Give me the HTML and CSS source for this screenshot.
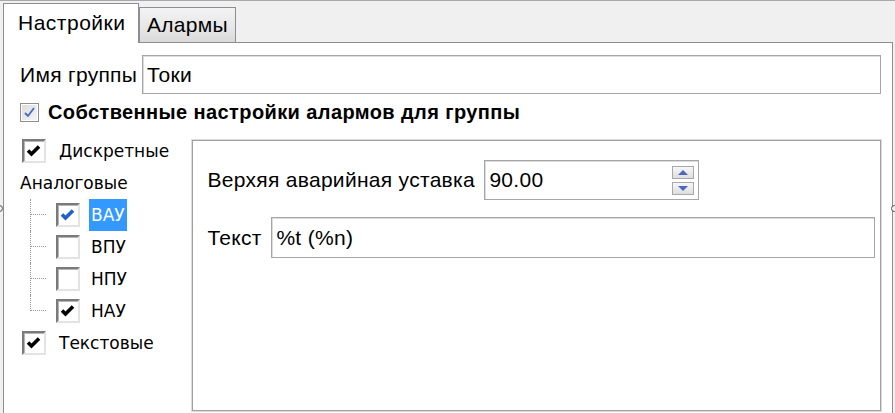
FILE: index.html
```html
<!DOCTYPE html>
<html lang="ru">
<head>
  <meta charset="UTF-8">
  <title>Настройки группы</title>
  <link rel="stylesheet" href="styles.css">
</head>
<body>

<!--вкладки-->
<div class="tabs">
  <div class="tab active">Настройки</div>
  <div class="tab">Алармы</div>
</div>

<div class="panel">

  <!--имя группы-->
  <div class="name-row">
    <span class="name-label">Имя группы</span>
    <div class="input name-input">Токи</div>
  </div>

  <!--собственные настройки-->
  <div class="own-row">
    <span class="vcheck">
      <svg width="13" height="13" viewBox="0 0 13 13"><path d="M2 7l3 3 6-8" fill="none" stroke="#4c66c4" stroke-width="1.8"/></svg>
    </span>
    <span class="own-text">Собственные настройки алармов для группы</span>
  </div>

  <div class="main">

    <!--дерево алармов-->
    <div class="tree">
      <div class="node">
        <span class="check"><svg width="20" height="20" viewBox="0 0 20 20"><path d="M4 9.5l3.5 3.5 7.5-7.5" fill="none" stroke="#000" stroke-width="3.6"/></svg></span>
        <span class="node-text">Дискретные</span>
      </div>
      <div class="node plain">Аналоговые</div>
      <div class="children">
        <div class="leaf">
          <span class="check"><svg width="20" height="20" viewBox="0 0 20 20"><path d="M4 9.5l3.5 3.5 7.5-7.5" fill="none" stroke="#1c5fcf" stroke-width="3.6"/></svg></span>
          <span class="leaf-text selected">ВАУ</span>
        </div>
        <div class="leaf">
          <span class="check"></span>
          <span class="leaf-text">ВПУ</span>
        </div>
        <div class="leaf">
          <span class="check"></span>
          <span class="leaf-text">НПУ</span>
        </div>
        <div class="leaf">
          <span class="check"><svg width="20" height="20" viewBox="0 0 20 20"><path d="M4 9.5l3.5 3.5 7.5-7.5" fill="none" stroke="#000" stroke-width="3.6"/></svg></span>
          <span class="leaf-text">НАУ</span>
        </div>
      </div>
      <div class="node">
        <span class="check"><svg width="20" height="20" viewBox="0 0 20 20"><path d="M4 9.5l3.5 3.5 7.5-7.5" fill="none" stroke="#000" stroke-width="3.6"/></svg></span>
        <span class="node-text">Текстовые</span>
      </div>
    </div>

    <!--параметры аларма-->
    <div class="group">
      <div class="field-row">
        <span class="field-label">Верхяя аварийная уставка</span>
        <div class="input spin-input">
          <span>90.00</span>
          <div class="spin">
            <span class="spin-btn"><i class="arrow-up"></i></span>
            <span class="spin-btn"><i class="arrow-down"></i></span>
          </div>
        </div>
      </div>
      <div class="field-row second">
        <span class="field-label short">Текст</span>
        <div class="input text-input">%t (%n)</div>
      </div>
    </div>
  </div>
</div>

<!--ручки сплиттера-->
<span class="grip grip-left"></span>
<span class="grip grip-right"></span>

</body>
</html>
```

FILE: styles.css
```css
* {
  margin: 0;
  padding: 0;
  box-sizing: border-box;
}

body {
  width: 895px;
  height: 413px;
  overflow: hidden;
  position: relative;
  background-color: #f0f0f0;
  border-top: 1px solid #a9a9a9;
  font-family: "Liberation Sans", Arial, sans-serif;
  font-size: 21px;
  letter-spacing: 0.3px;
  color: #000;
}

/*вкладки*/
.tabs {
  display: flex;
  align-items: flex-end;
  height: 41px;
  padding-left: 3px;
}

.tab {
  width: 97px;
  height: 35px;
  padding-left: 7px;
  line-height: 34px;
  border: 1px solid #8c8e94;
  border-bottom: none;
  background: linear-gradient(#f3f3f3, #e6e6e6 60%, #dadada);
}

.tab.active {
  width: 136px;
  height: 40px;
  margin-bottom: -1px;
  padding-left: 14px;
  line-height: 37px;
  letter-spacing: 0.5px;
  background: #fff;
  position: relative;
  z-index: 1;
}

/*белая панель*/
.panel {
  width: 890px;
  height: 380px;
  margin-left: 3px;
  padding: 12px 11px 0 16px;
  background-color: #fff;
  border: 1px solid #8c8e94;
}

.input {
  display: flex;
  align-items: center;
  height: 100%;
  padding-left: 4px;
  background-color: #fff;
  border: 1px solid #a4a6aa;
  box-shadow: inset 1px 1px 0 #dcdcdc;
}

.name-row {
  display: flex;
  align-items: center;
  height: 39px;
}

.name-label {
  width: 122px;
}

.name-input {
  flex: 1;
}

.own-row {
  display: flex;
  align-items: center;
  height: 19px;
  margin-top: 9px;
}

.vcheck {
  width: 19px;
  height: 19px;
  display: flex;
  align-items: center;
  justify-content: center;
  border: 1px solid #8f8f8f;
  background: linear-gradient(135deg, #dcdcdc, #f6f6f6);
  box-shadow: inset 0 0 0 1px #fff;
}

.own-text {
  margin-left: 9px;
  font-size: 20px;
  letter-spacing: 0.4px;
  font-weight: bold;
}

.main {
  display: flex;
  align-items: flex-start;
  margin-top: 13px;
}

/*дерево*/
.tree {
  width: 173px;
  font-family: "DejaVu Sans", sans-serif;
  font-size: 17px;
  letter-spacing: 0;
}

.node,
.leaf {
  display: flex;
  align-items: center;
  height: 32px;
}

.node .check {
  margin-left: 2px;
}

.node-text {
  margin-left: 13px;
}

.check {
  width: 24px;
  height: 24px;
  display: flex;
  align-items: center;
  justify-content: center;
  background-color: #fff;
  border: 2px solid;
  border-color: #7a7a7a #e3e3e3 #e3e3e3 #7a7a7a;
  box-shadow: inset 1px 1px 0 #b5b5b5;
}

.leaf::before {
  content: "";
  align-self: stretch;
  width: 16px;
  margin-left: 10px;
  margin-right: 9px;
  border-left: 1px dotted #9a9a9a;
  background: repeating-linear-gradient(90deg, #9a9a9a 0 1px, transparent 1px 2px) no-repeat 0 15px / 100% 1px;
}

.leaf:last-child::before {
  align-self: flex-start;
  height: 16px;
}

.leaf-text {
  margin-left: 9px;
  padding: 0 2px;
  line-height: 32px;
}

.leaf-text.selected {
  background-color: #3399ff;
  color: #fff;
}

/*рамка параметров*/
.group {
  width: 691px;
  height: 271px;
  margin-top: 5px;
  padding: 19px 5px 0 14px;
  border: 1px solid #a0a0a0;
  box-shadow: 0 0 0 1px #dcdcdc;
}

.field-row {
  display: flex;
  align-items: center;
  height: 40px;
}

.field-row.second {
  height: 41px;
  margin-top: 17px;
}

.field-label {
  width: 277px;
}

.field-label.short {
  width: 64px;
}

.spin-input {
  width: 215px;
  justify-content: space-between;
  padding-right: 4px;
}

.text-input {
  flex: 1;
}

.spin {
  display: flex;
  flex-direction: column;
  gap: 3px;
}

.spin-btn {
  width: 22px;
  height: 13px;
  display: flex;
  align-items: center;
  justify-content: center;
  border: 1px solid #a7a9ad;
  background: linear-gradient(#f7f7f7, #dedede);
}

.arrow-up,
.arrow-down {
  width: 0;
  height: 0;
  border-left: 5px solid transparent;
  border-right: 5px solid transparent;
}

.arrow-up {
  border-bottom: 5px solid #4b67c2;
}

.arrow-down {
  border-top: 5px solid #4b67c2;
}

/*ручки по краям*/
.grip {
  position: absolute;
  top: 204px;
  width: 7px;
  height: 7px;
  border: 1px solid #555;
  border-radius: 50%;
  background-color: #f0f0f0;
}

.grip-left {
  left: -4px;
}

.grip-right {
  left: 891px;
}
```
